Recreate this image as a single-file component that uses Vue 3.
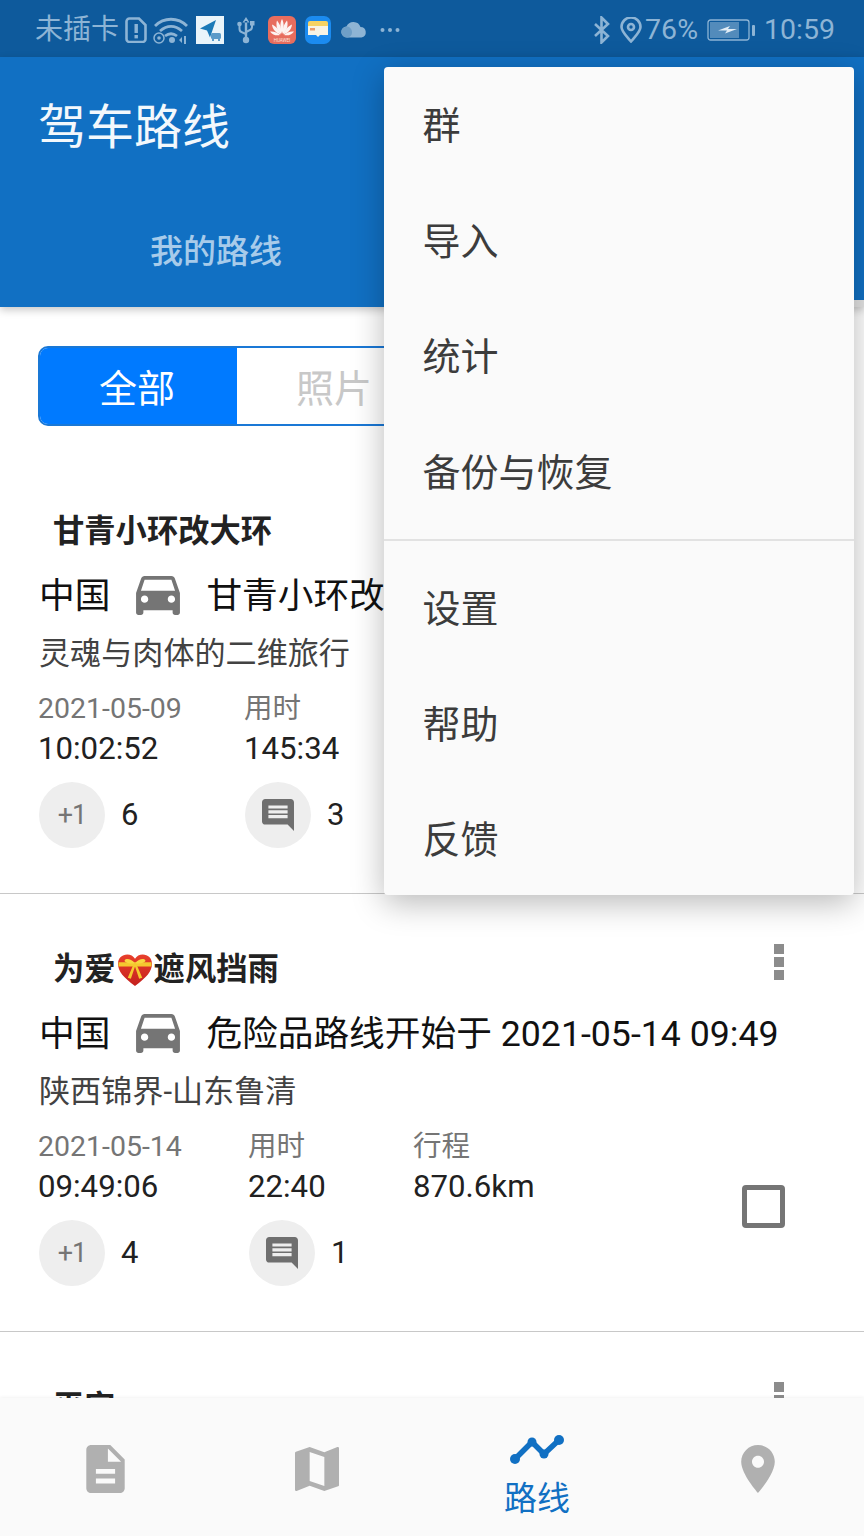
<script setup>
const groupOne = ['群', '导入', '统计', '备份与恢复']
const groupTwo = ['设置', '帮助', '反馈']
const routes = [
  { id: 1, title: '甘青小环改大环', name: '甘青小环改大环开始于 2021-05-09', note: '灵魂与肉体的二维旅行', date: '2021-05-09', time: '10:02:52', used: '145:34', dist: '3210.2km', likes: 6, comments: 3, cls: 'narrow' },
  { id: 2, before: '为爱', after: '遮风挡雨', name: '危险品路线开始于 2021-05-14 09:49', note: '陕西锦界-山东鲁清', date: '2021-05-14', time: '09:49:06', used: '22:40', dist: '870.6km', likes: 4, comments: 1, cls: 'wide' },
  { id: 3, title: '平安', name: '平安路线开始于 2021-05-12 08:10', note: '', date: '2021-05-12', time: '08:10:21', used: '30:12', dist: '512.4km', likes: 2, comments: 0, cls: 'wide' }
]
</script>

<template>
  <div class="phone">
    <div class="status">
      <div class="status-left">
        <span class="carrier">未插卡</span>
        <svg class="st sim" viewBox="0 0 22 26"><path d="M1.500 4.500a3 3 0 0 1 3-3H14l6.500 6.500v14a3 3 0 0 1-3 3h-13a3 3 0 0 1-3-3z" fill="none" stroke="currentColor" stroke-width="2.600"/><rect x="9.500" y="7" width="3.400" height="9" fill="currentColor"/><rect x="9.500" y="18" width="3.400" height="3.400" fill="currentColor"/></svg>
        <svg class="st wifi" viewBox="0 0 36 28"><path d="M2 10C11 1 25 1 34 10M7 15c7-6 15-6 22 0M12 20c4-3 8-3 12 0" fill="none" stroke="currentColor" stroke-width="2.800"/><circle cx="6" cy="22" r="5" fill="none" stroke="currentColor" stroke-width="1.500"/><circle cx="6" cy="22" r="1.800" fill="currentColor"/><circle cx="19" cy="24" r="3" fill="currentColor"/><path d="M26 24l3-3v6zM31 20h2v8h-2z" fill="currentColor"/></svg>
        <svg class="tile" viewBox="0 0 28 28"><rect width="28" height="28" fill="#e9f4fa"/><path d="M20 4L4 12.500l7 2 3 7z" fill="#1b7ab8"/><rect x="15" y="17" width="10" height="6" rx="1.500" fill="#5c9bc9"/><rect x="16" y="23" width="2" height="2" fill="#5c9bc9"/><rect x="22" y="23" width="2" height="2" fill="#5c9bc9"/></svg>
        <svg class="st usb" viewBox="0 0 18 28"><path d="M9 1L5.500 6.500h7zM7.800 5h2.400v19H7.800z" fill="currentColor"/><circle cx="9" cy="24" r="3.200" fill="currentColor"/><path d="M2.500 9v4c0 2 1 3 3 3.500L9 18M15 8v3c0 2-1 3-3 3.500L9 16" fill="none" stroke="currentColor" stroke-width="2"/><circle cx="2.500" cy="8" r="2.300" fill="currentColor"/><rect x="13" y="5" width="4.500" height="4.500" fill="currentColor"/></svg>
        <svg class="tile huawei" viewBox="0 0 28 28"><rect width="28" height="28" rx="6" fill="#e76d5e"/><g fill="#fdf3f1"><path d="M14 18c-2.200-5-2.200-11 0-15 2.200 4 2.200 10 0 15z"/><path d="M13 18C9 14.500 7.500 9.500 9 4.500 12 8 14 13 13 18z"/><path d="M15 18c4-3.500 5.500-8.500 4-13.500C16 8 14 13 15 18z"/><path d="M12.500 18.500C8 17 4.500 13.500 4 8.500 8 10.500 11.500 14 12.500 18.500z"/><path d="M15.500 18.500c4.500-1.500 8-5 8.500-10-4 2-7.500 5.500-8.500 10z"/><path d="M12 19c-3.500 1-7.500 0-10-3.500 4-.5 7.500 1 10 3.500z"/><path d="M16 19c3.500 1 7.500 0 10-3.500-4-.5-7.500 1-10 3.500z"/></g><text x="14" y="25.500" text-anchor="middle" font-size="4.500" fill="#fbe3df">HUAWEI</text></svg>
        <svg class="tile wallet" viewBox="0 0 26 28"><rect width="26" height="28" rx="7" fill="#1b8bf0"/><rect x="3" y="5" width="20" height="12" rx="2" fill="#f6d262"/><path d="M3 10h20v9H15l-2 2-2-2H3z" fill="#f7f3e5"/><rect x="5" y="12" width="5" height="2.500" fill="#ea9b6a"/></svg>
        <svg class="cloud" viewBox="0 0 26 17"><path d="M6 16.500a5.500 5.500 0 0 1-.5-11A7.500 7.500 0 0 1 19.500 6 5.300 5.300 0 0 1 20.500 16.500z" fill="#8eb4d4"/><path d="M6 16.500a5.500 5.500 0 0 1 0-11c2.500 0 5 2.500 5 5.500s-2 5.500-5 5.500z" fill="#6f9fc7"/></svg>
        <svg class="st dots" viewBox="0 0 20 4"><circle cx="2.500" cy="2" r="2" fill="currentColor"/><circle cx="10" cy="2" r="2" fill="currentColor"/><circle cx="17.500" cy="2" r="2" fill="currentColor"/></svg>
      </div>
      <div class="status-right">
        <svg class="st bt" viewBox="0 0 18 28"><path d="M2 8l13 12-6.500 6.500v-25L15 8 2 20" fill="none" stroke="currentColor" stroke-width="2.600"/></svg>
        <svg class="st pin-small" viewBox="0 0 22 26"><path d="M11 24.500C6 18.500 1.500 14.500 1.500 10a9.500 9.500 0 0 1 19 0c0 4.500-4.500 8.500-9.500 14.500z" fill="none" stroke="currentColor" stroke-width="2.600"/><circle cx="11" cy="10" r="3" fill="none" stroke="currentColor" stroke-width="2.600"/></svg>
        <span class="percent">76%</span>
        <svg class="st battery" viewBox="0 0 49 24"><rect x="1" y="2" width="41" height="20" rx="2.500" fill="none" stroke="currentColor" stroke-width="1.300"/><rect x="3" y="4" width="29" height="16" fill="currentColor" opacity=".55"/><path d="M11 12.500l12-4.500-2 3h9l-12 4.500 2-3z" fill="#e2edf6"/><rect x="45" y="7" width="3" height="11" rx="1" fill="currentColor"/></svg>
        <span class="clock">10:59</span>
      </div>
    </div>

    <header class="appbar">
      <h1 class="app-title">驾车路线</h1>
      <nav class="top-tabs">
        <span class="top-tab">我的路线</span>
        <span class="top-tab">全部路线</span>
      </nav>
      <span class="tab-indicator"></span>
    </header>

    <main class="content">
      <div class="segment">
        <span class="seg seg-on">全部</span>
        <span class="seg">照片</span>
        <span class="seg">收藏</span>
      </div>

      <article v-for="r in routes" :key="r.id" class="card">
        <div class="title-row">
          <h2 class="card-title" v-if="r.title">{{ r.title }}</h2>
          <h2 class="card-title" v-else>
            {{ r.before }}<svg class="heart" viewBox="0 0 34 32">
              <defs>
                <linearGradient id="heartFill" x1="0" y1="0" x2="0" y2="1">
                  <stop offset="0" stop-color="#e8402c"/>
                  <stop offset="1" stop-color="#c4201d"/>
                </linearGradient>
              </defs>
              <path d="M17 31C6 23 .5 17 .5 9.500 .5 4 4.500 .5 9.500 .5c3.200 0 5.800 1.500 7.500 4 1.700-2.500 4.300-4 7.500-4 5 0 9 3.500 9 9C33.500 17 28 23 17 31z" fill="url(#heartFill)"/>
              <path d="M1 8h32v4H1z" fill="#f5c92f"/>
              <path d="M17 9c-4-5-9-5-10-3s5 4 10 3zM17 9c4-5 9-5 10-3s-5 4-10 3z" fill="#f8d840"/>
              <path d="M16 9L10 23l3 1 4-12 4 12 3-1-6-14z" fill="#f5c92f"/>
            </svg>{{ r.after }}
          </h2>
          <span class="kebab"><i></i><i></i><i></i></span>
        </div>

        <div class="route-row">
          <span>中国</span>
          <svg class="car" viewBox="3 5 18 16"><path d="M18.920 6.010C18.720 5.420 18.160 5 17.500 5h-11c-.66 0-1.210.42-1.420 1.010L3 12v8c0 .55.45 1 1 1h1c.55 0 1-.45 1-1v-1h12v1c0 .55.45 1 1 1h1c.55 0 1-.45 1-1v-8l-2.080-5.990zM6.500 16c-.83 0-1.500-.67-1.500-1.500S5.670 13 6.500 13s1.500.67 1.500 1.500S7.330 16 6.500 16zm11 0c-.83 0-1.500-.67-1.500-1.500s.67-1.500 1.500-1.500 1.500.67 1.500 1.500-.67 1.500-1.500 1.500zM5 11l1.500-4.500h11L19 11H5z"/></svg>
          <span>{{ r.name }}</span>
        </div>
        <p class="note">{{ r.note }}</p>

        <div class="lower">
          <div class="stats" :class="r.cls">
            <span class="label">{{ r.date }}</span>
            <span class="label">用时</span>
            <span class="label">行程</span>
            <span class="value">{{ r.time }}</span>
            <span class="value">{{ r.used }}</span>
            <span class="value">{{ r.dist }}</span>
            <div class="action">
              <span class="round plus">+1</span>
              <span class="count">{{ r.likes }}</span>
            </div>
            <div class="action">
              <span class="round">
                <svg class="msg" viewBox="2 2 20 20"><path d="M20 2H4c-1.100 0-1.990.9-1.990 2L2 22l4-4h14c1.100 0 2-.9 2-2V4c0-1.100-.9-2-2-2zm-2 12H6v-2h12v2zm0-3H6V9h12v2zm0-3H6V6h12v2z"/></svg>
              </span>
              <span class="count">{{ r.comments }}</span>
            </div>
          </div>
          <span class="check"></span>
        </div>
      </article>
    </main>

    <footer class="bottom">
      <div class="nav-item">
        <svg class="nav-doc" viewBox="4 2 16 20"><path d="M14 2H6c-1.100 0-2 .9-2 2v16c0 1.100.9 2 2 2h12c1.100 0 2-.9 2-2V8l-6-6zm2 16H8v-2h8v2zm0-4H8v-2h8v2zm-3-5V3.500L18.500 9H13z"/></svg>
      </div>
      <div class="nav-item">
        <svg class="nav-map" viewBox="3 3 18 18"><path d="M20.500 3l-.16.03L15 5.100 9 3 3.360 4.900c-.21.07-.36.25-.36.48V20.500c0 .28.22.5.5.5l.16-.03L9 18.900l6 2.100 5.640-1.900c.21-.07.360-.25.360-.48V3.500c0-.28-.22-.5-.5-.5zM15 19l-6-2.110V5l6 2.110V19z"/></svg>
      </div>
      <div class="nav-item active">
        <svg class="nav-route" viewBox="0 0 54 32"><path d="M5 25L22 8l12 12L49 6" fill="none" stroke="#1170c3" stroke-width="5.500" stroke-linejoin="round"/><circle cx="5" cy="25" r="5" fill="#1170c3"/><circle cx="22" cy="8" r="4.500" fill="#1170c3"/><circle cx="34" cy="20" r="4.500" fill="#1170c3"/><circle cx="49" cy="6" r="5" fill="#1170c3"/></svg>
        <span class="nav-label">路线</span>
      </div>
      <div class="nav-item">
        <svg class="nav-pin" viewBox="5 2 14 20"><path d="M12 2C8.130 2 5 5.130 5 9c0 5.250 7 13 7 13s7-7.750 7-13c0-3.870-3.130-7-7-7zm0 9.500c-1.380 0-2.500-1.120-2.500-2.500s1.120-2.500 2.500-2.500 2.500 1.120 2.500 2.500-1.120 2.500-2.500 2.500z"/></svg>
      </div>
    </footer>

    <aside class="menu">
      <ul class="menu-group">
        <li v-for="m in groupOne" :key="m">{{ m }}</li>
      </ul>
      <ul class="menu-group second">
        <li v-for="m in groupTwo" :key="m">{{ m }}</li>
      </ul>
    </aside>
  </div>
</template>

<style scoped>
.phone {
  position: relative;
  width: 864px;
  height: 1536px;
  display: flex;
  flex-direction: column;
  overflow: hidden;
  background: #fff;
  font-family: Roboto, "Noto Sans CJK SC", sans-serif;
}

.status {
  flex: 0 0 57px;
  display: flex;
  align-items: center;
  justify-content: space-between;
  padding: 2px 29px 0 35px;
  box-sizing: border-box;
  background: #0e5a9c;
  color: #8db4d5;
}
.status-left, .status-right { display: flex; align-items: center; }
.carrier { font-size: 28px; line-height: 40px; width: 90px; }
.st { display: block; }
.sim { width: 22px; height: 26px; }
.wifi { width: 36px; height: 28px; margin-left: 6px; }
.tile { display: block; width: 28px; height: 28px; margin-left: 7px; }
.usb { width: 18px; height: 28px; margin-left: 13px; }
.huawei { margin-left: 13px; }
.wallet { width: 26px; margin-left: 9px; }
.cloud { display: block; width: 26px; height: 17px; margin-left: 10px; }
.dots { width: 20px; height: 4px; margin-left: 13px; }
.bt { width: 18px; height: 28px; }
.pin-small { width: 22px; height: 26px; margin-left: 9px; }
.percent { font-size: 28.500px; line-height: 40px; margin-left: 3px; }
.battery { width: 49px; height: 24px; margin-left: 9px; }
.clock { font-size: 28.500px; line-height: 40px; margin-left: 8px; }

.appbar {
  position: relative;
  z-index: 2;
  flex: 0 0 250px;
  display: flex;
  flex-direction: column;
  background: #1170c3;
  box-shadow: 0 3px 8px rgba(0, 0, 0, .22);
}
.app-title {
  margin: 37px 0 0 38px;
  height: 68px;
  font-size: 48px;
  line-height: 68px;
  font-weight: 400;
  color: #f3f8fc;
}
.top-tabs {
  display: grid;
  grid-template-columns: 1fr 1fr;
  margin-top: 67px;
}
.top-tab {
  text-align: center;
  font-size: 33px;
  line-height: 46px;
  font-weight: 500;
  color: #a7cbea;
}
.tab-indicator {
  position: absolute;
  right: 0;
  bottom: 0;
  width: 432px;
  height: 7px;
  background: #e4e4e4;
}

.content {
  flex: 1 1 auto;
  min-height: 0;
  overflow: hidden;
}
.segment {
  display: grid;
  grid-template-columns: repeat(3, 197px);
  width: 595px;
  height: 80px;
  margin: 39px 0 30px 38px;
  box-sizing: border-box;
  border: 2px solid #1a78d6;
  border-radius: 10px;
  overflow: hidden;
}
.seg {
  display: flex;
  align-items: center;
  justify-content: center;
  padding: 0 3px 2px 0;
  font-size: 38px;
  color: #c8c8c8;
  background: #fff;
}
.seg-on { color: #fff; background: #007aff; }

.card {
  position: relative;
  height: 438px;
  box-sizing: border-box;
  padding-top: 50px;
  border-bottom: 1px solid #c8c8c8;
}
.title-row {
  display: flex;
  align-items: flex-start;
  justify-content: space-between;
  height: 50px;
  padding: 0 80px 0 53px;
}
.card-title {
  margin: 1px 0 0;
  font-size: 31.300px;
  line-height: 50px;
  font-weight: 700;
  color: #222;
  display: flex;
  align-items: center;
  white-space: pre;
}
.heart { width: 36px; height: 33px; margin: 0 1px; }
.kebab {
  display: flex;
  flex-direction: column;
  gap: 3px;
  width: 10px;
}
.kebab i { display: block; height: 10px; background: #8c8c8c; }

.route-row {
  display: flex;
  align-items: center;
  height: 50px;
  margin-top: 11px;
  padding-left: 39px;
  font-size: 35.700px;
  color: #111;
  white-space: nowrap;
}
.car {
  width: 44px;
  height: 39px;
  margin: 6px 26px 0;
  fill: #757575;
}
.note {
  height: 44px;
  margin: 15px 0 0 39px;
  font-size: 31.100px;
  line-height: 44px;
  color: #424242;
}

.lower {
  position: relative;
  display: flex;
  justify-content: space-between;
  margin-top: 15px;
  padding: 0 79px 0 38px;
}
.stats {
  display: grid;
  grid-template-rows: 36px 40px 66px;
  white-space: nowrap;
}
.stats.narrow { grid-template-columns: 206px 168px auto; }
.stats.wide { grid-template-columns: 210px 165px auto; }
.label { font-size: 28.500px; line-height: 36px; color: #757575; }
.value { font-size: 31.200px; line-height: 40px; color: #212121; margin-top: 2px; }
.action {
  display: flex;
  align-items: center;
  gap: 16px;
  margin: 29px 0 0 1px;
}
.round {
  display: flex;
  flex: none;
  align-items: center;
  justify-content: center;
  width: 66px;
  height: 66px;
  border-radius: 50%;
  background: #eeeeee;
}
.plus { font-size: 27px; color: #757575; letter-spacing: -1px; }
.msg { width: 32px; height: 32px; fill: #6f6f6f; transform: scaleX(-1); }
.count { font-size: 31px; color: #212121; }
.check {
  width: 43px;
  height: 43px;
  margin-top: 56px;
  box-sizing: border-box;
  border: 5px solid #757575;
  border-radius: 4px;
}

.bottom {
  position: relative;
  z-index: 2;
  flex: 0 0 138px;
  display: grid;
  grid-template-columns: 210px 214px 226px 214px;
  background: #fafafa;
  box-shadow: 0 -1px 3px rgba(0, 0, 0, .05);
}
.nav-item {
  display: flex;
  flex-direction: column;
  align-items: center;
  justify-content: center;
  padding-top: 3px;
  fill: #b0b0b0;
}
.nav-item:last-child { padding-left: 2px; }
.nav-doc { width: 39px; height: 48px; }
.nav-map { width: 44px; height: 44px; }
.nav-pin { width: 34px; height: 48px; }
.nav-item.active { justify-content: flex-start; padding: 36px 0 0; }
.nav-route { width: 54px; height: 32px; }
.nav-label {
  margin-top: 11px;
  font-size: 33px;
  line-height: 44px;
  color: #1170c3;
}

.menu {
  position: absolute;
  z-index: 3;
  top: 67px;
  left: 384px;
  width: 470px;
  height: 828px;
  border-radius: 4px;
  background: #fafafa;
  box-shadow: 0 8px 32px rgba(0, 0, 0, .28);
}
.menu-group {
  margin: 0;
  padding: 2px 0 8px;
  list-style: none;
}
.menu-group.second {
  padding: 11px 0 0;
  border-top: 2px solid #e2e2e2;
}
.menu-group li {
  height: 115.500px;
  padding-left: 38.500px;
  font-size: 38px;
  line-height: 115px;
  color: #3c3c3c;
}
</style>

<style>
html, body { margin: 0; padding: 0; background: #fff; }
</style>
